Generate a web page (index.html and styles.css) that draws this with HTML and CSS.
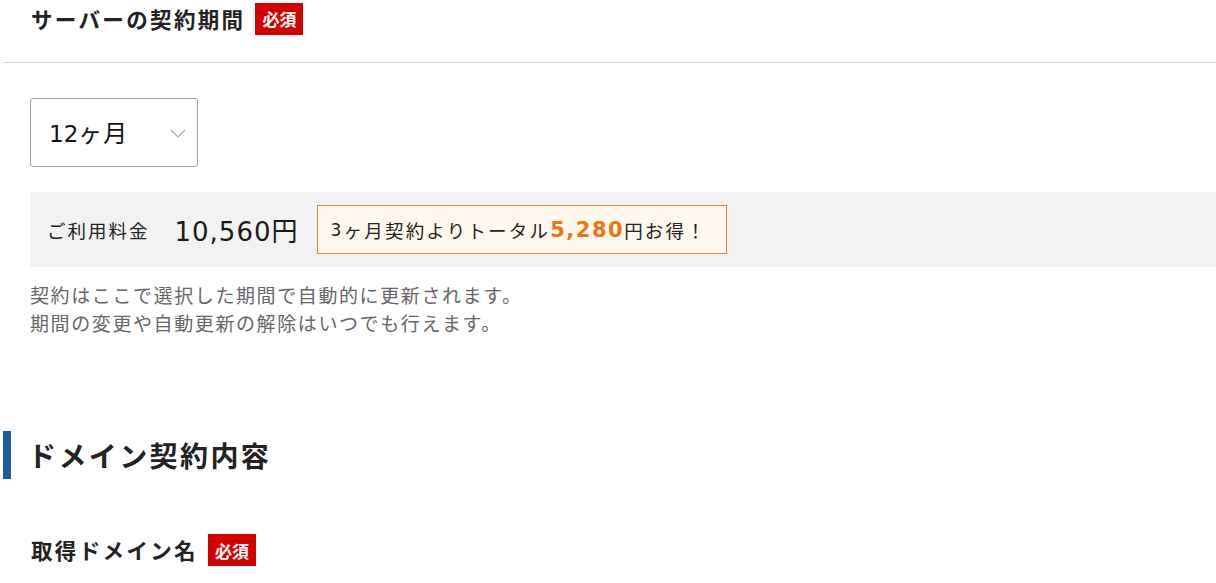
FILE: index.html
```html
<!DOCTYPE html>
<html lang="ja">
<head>
<meta charset="utf-8">
<title>サーバーの契約期間</title>
<link rel="stylesheet" href="styles.css">
</head>
<body>
<div class="page">
  <div class="field-head">
    <h3 class="field-title">サーバーの契約期間</h3>
    <span class="badge">必須</span>
  </div>
  <div class="field-body">
    <div class="select">
      <span class="select-value"><span class="num">12</span>ヶ月</span>
      <svg class="chevron" width="16" height="9" viewBox="0 0 16 9"><polyline points="1,1 8,8 15,1" fill="none" stroke="#a8a8a8" stroke-width="1.2"/></svg>
    </div>
    <div class="price-band">
      <span class="price-label">ご利用料金</span>
      <span class="price-value"><span class="num">10,560</span>円</span>
      <div class="save-box"><span class="num-sm">3</span>ヶ月契約よりトータル<strong class="save-amt">5,280</strong>円お得！</div>
    </div>
    <p class="note">契約はここで選択した期間で自動的に更新されます。<br>期間の変更や自動更新の解除はいつでも行えます。</p>
  </div>

  <h2 class="section-title">ドメイン契約内容</h2>

  <div class="field-head2">
    <h3 class="field-title">取得ドメイン名</h3>
    <span class="badge">必須</span>
  </div>
</div>
</body>
</html>
```

FILE: styles.css
```css
* { box-sizing: border-box; }
html, body { margin: 0; padding: 0; background: #fff; }
body {
  font-family: "Noto Sans CJK JP", sans-serif;
  color: #222;
  overflow: hidden;
}
.page {
  padding-left: 3px;
}
.field-head {
  display: flex;
  align-items: center;
  height: 63px;
  padding: 2px 0 27px 28px;
  border-bottom: 1px solid #d3d3d3;
}
.field-title {
  margin: 0;
  font-size: 21.5px;
  font-weight: 700;
  letter-spacing: 2.35px;
  line-height: 32px;
  color: #222;
}
.badge {
  display: inline-flex;
  align-items: center;
  justify-content: center;
  width: 48px;
  height: 32px;
  margin-left: 10px;
  background: #d40000;
  color: #fff;
  font-size: 17px;
  font-weight: 700;
  letter-spacing: 0;
}
.field-body {
  padding: 35px 0 0 27px;
}
.select {
  display: flex;
  align-items: center;
  justify-content: space-between;
  width: 168px;
  height: 69px;
  border: 1px solid #a0a0a0;
  border-radius: 3px;
  padding: 0 11px 0 18px;
}
.select-value {
  font-size: 24px;
  letter-spacing: 1px;
  color: #111;
  line-height: 1;
}
.select-value .num {
  font-family: "DejaVu Sans", "Noto Sans CJK JP", sans-serif;
  font-size: 23px;
  letter-spacing: 0;
}
.chevron { display: block; margin-top: 2px; }
.price-band {
  display: flex;
  align-items: center;
  margin-top: 25px;
  height: 75px;
  background: #f2f2f2;
  padding-left: 17px;
}
.price-label {
  font-size: 18.5px;
  letter-spacing: 2px;
  color: #222;
}
.price-value {
  margin-left: 25px;
  font-size: 26px;
  color: #1a1a1a;
  letter-spacing: 1px;
}
.price-value .num {
  font-family: "DejaVu Sans", "Noto Sans CJK JP", sans-serif;
  font-size: 26px;
  letter-spacing: 1px;
}
.save-box {
  display: flex;
  align-items: center;
  margin-left: 18px;
  height: 49px;
  width: 410px;
  padding: 0 13px;
  background: #fff8ee;
  border: 1px solid #d4883e;
  font-size: 18.5px;
  letter-spacing: 2.2px;
  color: #222;
}
.num-sm {
  font-family: "DejaVu Sans", "Noto Sans CJK JP", sans-serif;
  font-size: 17px;
}
.save-amt {
  font-family: "DejaVu Sans", "Noto Sans CJK JP", sans-serif;
  font-size: 21px;
  font-weight: 700;
  color: #ec7615;
  letter-spacing: 1.5px;
}
.note {
  margin: 14px 0 0;
  font-size: 19px;
  line-height: 28px;
  letter-spacing: 1.6px;
  color: #666;
}
.section-title {
  margin: 94px 0 0;
  height: 48px;
  display: flex;
  align-items: center;
  border-left: 8px solid #1b5e9e;
  padding-left: 17px;
  font-size: 28px;
  font-weight: 700;
  letter-spacing: 2.4px;
  color: #222;
}
.field-head2 {
  display: flex;
  align-items: center;
  margin-top: 55px;
  padding-left: 28px;
}
```
